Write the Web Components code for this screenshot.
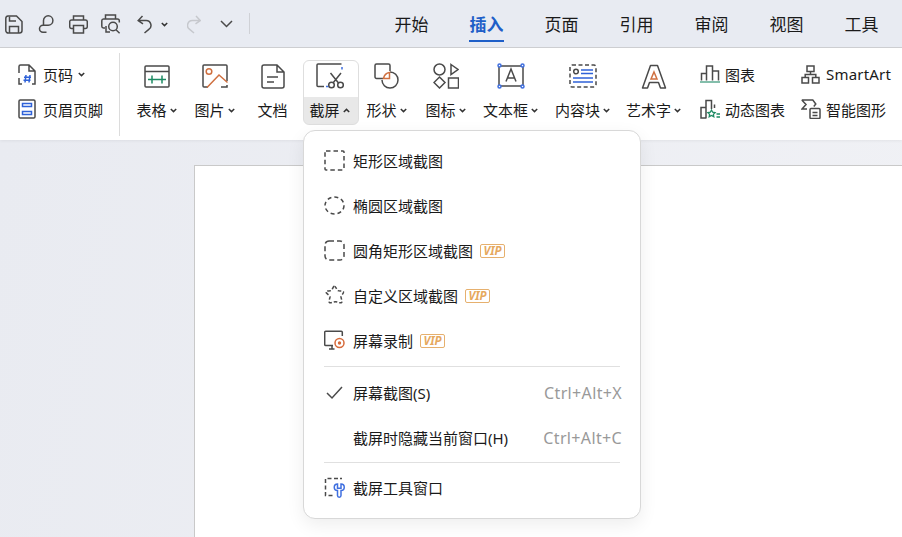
<![CDATA[<!DOCTYPE html>
<html lang="zh"><head><meta charset="utf-8"><title>截屏</title>
<style>
html,body{margin:0;height:100%;overflow:hidden;background:#eceef4}
body{font-family:"Noto Sans","Noto Sans CJK SC",sans-serif;color:#1a1a1a;width:902px;height:537px;position:relative;display:flex;flex-direction:column}
svg{display:block;fill:none;stroke:#4a4a4a;stroke-width:1.5}
</style>
<script>
const def=(name,html)=>{customElements.define(name,class extends HTMLElement{
  constructor(){super();this.attachShadow({mode:'open'})}
  connectedCallback(){this.shadowRoot.innerHTML=typeof html==='function'?html(this):html;}
})};
const chev=(up,ml=3)=>`<svg class="chev" width="7" height="5" viewBox="0 0 7 5" style="display:inline-block;margin-left:${ml}px;fill:none;stroke:#333;stroke-width:1.500;vertical-align:2px"><path d="${up?'M.8 4L3.500 1.400 6.200 4':'M.8 1l2.700 2.600L6.200 1'}"/></svg>`;

def('qa-chevron',`<style>:host{display:block}</style>${chev(false,0)}`);

def('app-titlebar',`<style>
:host{display:flex;align-items:center;flex:none;height:47px;background:#e8ebf2;border-bottom:1px solid #cfd0d3}
.qa{display:flex;align-items:center;width:249px;height:100%;padding-top:1px;box-sizing:border-box}
.div{width:1px;height:21px;background:#cfd1d6;margin-right:124px}
.tabs{display:flex;margin-top:2px}
</style><div class="qa"><slot name="qa"></slot></div><div class="div"></div><div class="tabs"><slot></slot></div>`);

def('tab-item',e=>`<style>
:host{display:flex;flex-direction:column;align-items:center;width:75px;font-size:17px;line-height:24px;position:relative;color:#1a1a1a}
.a{color:#1f5fc8;font-weight:700}
.u{position:absolute;left:20px;right:20px;top:27px;height:2px;background:#1f5fc8}
</style><span class="${e.hasAttribute('active')?'a':''}"><slot></slot></span>${e.hasAttribute('active')?'<i class="u"></i>':''}`);

def('app-ribbon',`<style>
:host{display:flex;flex:none;height:92px;background:#fff;box-sizing:border-box;padding:5px 0 0 0;box-shadow:0 1px 3px rgba(0,0,0,.06);position:relative;z-index:1}
.first{width:101px;padding:9px 0 0 18px}
.sep{width:1px;height:83px;background:#dcdcdc;margin-right:9px}
.tools{display:flex;margin-right:11px;padding-top:7px}
.small{display:flex;padding-top:9px}
</style><div class="first"><slot name="first"></slot></div><div class="sep"></div><div class="tools"><slot></slot></div><div class="small"><slot name="small"></slot></div>`);

def('ribbon-tool',e=>`<style>
:host{display:block;width:${e.getAttribute('w')}px;height:65px;font-size:15px;color:#1a1a1a}
.b{height:100%;display:flex;flex-direction:column;align-items:center;border-radius:6px;box-sizing:border-box;border:1px solid transparent}
.open{border-color:#dedede;background:linear-gradient(#fff 0 36px,#e8e8e8 36px)}
.ic{height:36px;display:flex;align-items:center;justify-content:center;padding:0 2px 4px 0;box-sizing:border-box}
.l{height:28px;display:flex;align-items:center;white-space:nowrap;line-height:1;padding:1px 3px 0 0}
</style><div class="b ${e.hasAttribute('open')?'open':''}"><div class="ic"><slot></slot></div><div class="l">${e.getAttribute('label')}${e.hasAttribute('chev')?chev(e.hasAttribute('up')):''}</div></div>`);

def('ribbon-small',e=>`<style>
:host{display:flex;align-items:center;height:24px;font-size:15px;white-space:nowrap;color:#1a1a1a}
.i{display:flex;width:25px;flex:none}
</style><span class="i"><slot name="icon"></slot></span><span><slot></slot></span>${e.hasAttribute('chev')?chev(false,5):''}`);

def('doc-canvas',`<style>
:host{display:block;flex:none;height:397px;padding:25px 0 0 194px;box-sizing:border-box;background:linear-gradient(100deg,#e9ebf1,#f0f1f5)}
.p{height:100%;background:#fff;border:1px solid #c9c9c9;border-right:0;border-bottom:0}
</style><div class="p"></div>`);

def('shot-menu',`<style>
:host{display:block;position:absolute;left:303px;top:130px;width:338px;height:389px;box-sizing:border-box;padding:7px 0 8px;background:#fff;border:1px solid #d8d8d8;border-radius:12px;box-shadow:0 6px 18px rgba(0,0,0,.07);z-index:5}
</style><slot></slot>`);

def('menu-sep',`<style>:host{display:block;height:1px;background:#e0e0e0;margin-left:20px!important;margin-right:20px!important}</style>`);

def('vip-badge',`<style>
:host{display:inline-flex;align-items:center;justify-content:center;width:25px;height:14px;box-sizing:border-box;border:1.200px solid #e6b06e;border-radius:2px;color:#e6a85e;font:italic 700 11.500px "Noto Sans",sans-serif;margin-left:7px}
</style>VIP`);

def('shot-item',e=>`<style>
:host{display:flex;align-items:center;height:45px;font-size:15px;padding-left:20px;padding-right:18px;color:#1a1a1a;white-space:nowrap}
.i{width:29px;flex:none;display:flex}
.k{margin-left:auto;color:#999;font-size:16px;letter-spacing:.35px}
</style><span class="i"><slot name="icon"></slot></span><span>${e.getAttribute('label')}</span>${e.hasAttribute('vip')?'<vip-badge></vip-badge>':''}${e.getAttribute('key')?`<span class="k">${e.getAttribute('key')}</span>`:''}`);
</script>
</head><body>
<app-titlebar>
  <svg slot="qa" style="margin-left:5px" width="18" height="19" viewBox="0 0 18 19"><path d="M3 1h8.500L17 6.500V15.500a2.500 2.500 0 0 1-2.500 2.500h-11A2.500 2.500 0 0 1 .8 15.500v-12A2.500 2.500 0 0 1 3 1z"/><path d="M4.500 1.500V6h6.500M4.500 18v-6.500h9V18"/></svg>
  <svg slot="qa" style="margin-left:15px" width="17" height="19" viewBox="0 0 17 19"><path d="M5.500 9.500V5.500A4.700 4.700 0 1 1 10.200 10.200H5A3.500 3.500 0 1 0 5 17.200H8.500"/></svg>
  <svg slot="qa" style="margin-left:14px" width="19" height="19" viewBox="0 0 19 19"><path d="M4.500 5V1h10v4M4.500 13.500H2.500a1.800 1.800 0 0 1-1.800-1.800V6.800A1.800 1.800 0 0 1 2.500 5h14a1.800 1.800 0 0 1 1.800 1.800v4.900a1.800 1.800 0 0 1-1.800 1.800h-2"/><path d="M4.500 10.500h10V18h-10z"/></svg>
  <svg slot="qa" style="margin-left:13px" width="20" height="20" viewBox="0 0 20 20"><path d="M4.500 5V1h10v4M4 14H2.500A1.800 1.800 0 0 1 .8 12.200V6.800A1.800 1.800 0 0 1 2.500 5h14a1.800 1.800 0 0 1 1.800 1.800v1.700"/><circle cx="12" cy="12.500" r="4.300"/><path d="M15 15.800l3.600 3.400M5 12v6h4"/></svg>
  <svg slot="qa" style="margin-left:16px" width="15" height="19" viewBox="0 0 15 19"><path d="M5.500 1L1.200 5.600l4.800 3.200M1.500 5.600h7.700a4.800 4.800 0 0 1 2.600 8.800L7.500 18"/></svg>
  <qa-chevron slot="qa" style="margin-left:9px"></qa-chevron>
  <svg slot="qa" style="margin-left:19px;stroke:#c6c8cd" width="14" height="19" viewBox="0 0 14 19"><path d="M9 1l4.300 4.600-4.800 3.200M13 5.600H5.300a4.800 4.800 0 0 0-2.600 8.800L7 18"/></svg>
  <svg slot="qa" style="margin-left:19px" width="13" height="8" viewBox="0 0 13 8"><path d="M1 1l5.500 5.500L12 1"/></svg>
  <tab-item>开始</tab-item><tab-item active>插入</tab-item><tab-item>页面</tab-item><tab-item>引用</tab-item><tab-item>审阅</tab-item><tab-item>视图</tab-item><tab-item>工具</tab-item>
</app-titlebar>

<app-ribbon>
  <div slot="first" style="display:flex;flex-direction:column;gap:11px">
    <ribbon-small chev><svg slot="icon" width="18" height="21" viewBox="0 0 18 21"><path d="M1 9V2.500A1.500 1.500 0 0 1 2.500 1H11l6 6v13h-3M11 1v6h6M1 14v6h3"/><path stroke="#2f62d8" d="M8 11l-1 7.500M12 11l-1 7.500M6 13.200h7M5.500 16.200h7"/></svg>页码</ribbon-small>
    <ribbon-small><svg slot="icon" width="18" height="20" viewBox="0 0 18 20"><rect x="1" y="1" width="16" height="18" rx="1.200"/><path stroke="#2f62d8" d="M4.500 4.500h9v3h-9zM4.500 12.500h9v3h-9z"/></svg>页眉页脚</ribbon-small>
  </div>
  <ribbon-tool w="58" chev label="表格"><svg width="26" height="23" viewBox="0 0 26 23"><rect x="1" y="1" width="24" height="21" rx="1"/><path d="M1 6.500h24"/><path stroke="#1d8a63" d="M4 14.500h18M8 10.500v8M18 10.500v8"/></svg></ribbon-tool>
  <ribbon-tool w="58" chev label="图片"><svg width="26" height="24" viewBox="0 0 26 24"><path d="M6 23H2a1 1 0 0 1-1-1V2a1 1 0 0 1 1-1h22a1 1 0 0 1 1 1v15M25 21v2h-6"/><g stroke="#cf7040"><circle cx="7" cy="7.500" r="2.800"/><path d="M5 23.500L17 11l8.500 7.500"/></g></svg></ribbon-tool>
  <ribbon-tool w="58" label="文档"><svg width="24" height="25" viewBox="0 0 24 25"><path d="M3 1h13l7 7v14a2 2 0 0 1-2 2H3a2 2 0 0 1-2-2V3a2 2 0 0 1 2-2zM16 1v7h7M6 13h11M6 18h7"/></svg></ribbon-tool>
  <ribbon-tool w="56" chev up open label="截屏"><svg width="28" height="26" viewBox="0 0 28 26"><path d="M25.500 1H2a1 1 0 0 0-1 1v20.500a1 1 0 0 0 1 1h6"/><path stroke="#3f6fe0" d="M26 4v2.500M10 23.500h2.500"/><circle cx="15.500" cy="22" r="2.800"/><circle cx="24.500" cy="22" r="2.800"/><path d="M14.500 10l8 10M25 10l-8 10"/></svg></ribbon-tool>
  <ribbon-tool w="58" chev label="形状"><svg width="26" height="26" viewBox="0 0 26 26"><path d="M9 15.500H2.500a1.500 1.500 0 0 1-1.500-1.500V2.500A1.500 1.500 0 0 1 2.500 1h12A1.500 1.500 0 0 1 16 2.500V8"/><path d="M16 9a8 8 0 1 1-8 8"/><path stroke="#cf7040" d="M9.500 15.500c.6-3 3-5.500 6-6V15.500z"/></svg></ribbon-tool>
  <ribbon-tool w="60" chev label="图标"><svg width="26" height="26" viewBox="0 0 26 26"><circle cx="6.500" cy="6.500" r="5.500"/><path d="M18 1.500l7 5-7 5zM6.500 14l5.500 5.500-5.500 5.500-5.500-5.500zM15.500 15h10v10h-10z"/></svg></ribbon-tool>
  <ribbon-tool w="70" chev label="文本框"><svg width="28" height="26" viewBox="0 0 28 26"><path d="M3 3h22M3 23h22M2 3v20M26 3v20"/><path d="M9 18.500L14 6l5 12.500M10.500 15h7"/><g fill="#fff" stroke="#3f6fe0"><circle cx="2.500" cy="2.500" r="1.500"/><circle cx="25.500" cy="2.500" r="1.500"/><circle cx="2.500" cy="23.500" r="1.500"/><circle cx="25.500" cy="23.500" r="1.500"/></g></svg></ribbon-tool>
  <ribbon-tool w="74" chev label="内容块"><svg width="28" height="24" viewBox="0 0 28 24"><path stroke-dasharray="4 2.500" d="M3 1h22a2 2 0 0 1 2 2v18a2 2 0 0 1-2 2H3a2 2 0 0 1-2-2V3a2 2 0 0 1 2-2z"/><circle cx="7" cy="7.500" r="2.300"/><path stroke="#2f62d8" d="M12 6h12M12 9.500h12M4 14h20M4 18h20"/></svg></ribbon-tool>
  <ribbon-tool w="68" chev label="艺术字"><svg width="26" height="25" viewBox="0 0 26 25"><path d="M1.500 24L9.500 1.500h7l8 22.500h-5l-2-5.500h-9l-2 5.500z" stroke-linejoin="round"/><path stroke="#cf7040" d="M13 8l3 7h-6z"/></svg></ribbon-tool>
  <div slot="small" style="display:flex;flex-direction:column;gap:11px;width:101px">
    <ribbon-small><svg slot="icon" width="20" height="18" viewBox="0 0 20 18"><path d="M1.500 15.500V8.500h5V1h6v5h6v9.500M6.500 8.500v7M12.500 6v9.500"/><path stroke="#5aa88f" d="M0 17h20"/></svg>图表</ribbon-small>
    <ribbon-small><svg slot="icon" width="21" height="20" viewBox="0 0 21 20"><path d="M6.500 19H1V8.500h5V1.500h5.500V10M6 8.500V19M14.500 5.500V9"/><path stroke="#1d8a63" stroke-width="1.300" d="M11.500 11l1.200 2.200 2.400.4-1.700 1.700.4 2.400-2.300-1.200-2.300 1.200.4-2.400-1.700-1.700 2.400-.4zM16.500 15h3.500M16.500 18h3.500"/></svg>动态图表</ribbon-small>
  </div>
  <div slot="small" style="display:flex;flex-direction:column;gap:11px">
    <ribbon-small><svg slot="icon" width="19" height="19" viewBox="0 0 19 19"><rect x="6" y="1" width="7" height="5.500"/><rect x="1" y="12.500" width="6.500" height="5.500"/><rect x="11.500" y="12.500" width="6.500" height="5.500"/><path d="M9.500 6.500v3M4.200 12.500v-3h10.600v3"/></svg><span style="font-size:15px;letter-spacing:.2px">SmartArt</span></ribbon-small>
    <ribbon-small><svg slot="icon" width="20" height="20" viewBox="0 0 20 20"><path d="M.8 1h11l3 4-2 2.500M.8 1l4.200 4.500L1 10h5"/><rect x="9" y="9.500" width="10" height="10" rx="1"/><path d="M11.500 13.500h5M11.500 16.500h5"/></svg>智能图形</ribbon-small>
  </div>
</app-ribbon>

<doc-canvas></doc-canvas>

<shot-menu>
  <shot-item label="矩形区域截图"><svg slot="icon" width="21" height="21" viewBox="0 0 21 21"><rect x="1" y="1" width="19" height="19" rx="1" stroke-dasharray="4.500 3"/></svg></shot-item>
  <shot-item label="椭圆区域截图"><svg slot="icon" width="21" height="21" viewBox="0 0 21 21"><ellipse cx="10.500" cy="10.500" rx="9.500" ry="8.500" stroke-dasharray="4 3"/></svg></shot-item>
  <shot-item label="圆角矩形区域截图" vip><svg slot="icon" width="21" height="21" viewBox="0 0 21 21"><rect x="1" y="1" width="19" height="19" rx="4" stroke-dasharray="5 3"/></svg></shot-item>
  <shot-item label="自定义区域截图" vip><svg slot="icon" width="21" height="21" viewBox="0 0 21 21"><path stroke-dasharray="3.500 2" d="M10.500 1.200c1.500 0 2 3.800 3.500 4.400s4.800-.2 5.500 1.200c.6 1.400-2.400 3.400-2.500 5s1.700 4.500.6 5.700-3.700-.8-6.100-.8-5 2-6.100.8.700-4.100.6-5.700S1.400 8.200 2 6.800C2.700 5.400 5.500 6.200 7 5.600s2-4.400 3.500-4.400z"/></svg></shot-item>
  <shot-item label="屏幕录制" vip><svg slot="icon" width="21" height="21" viewBox="0 0 21 21"><path d="M9 15.500H1.700a1 1 0 0 1-1-1V2.200a1 1 0 0 1 1-1h15.600a1 1 0 0 1 1 1V6M5 19h5.500M8 15.500V19"/><circle cx="15.500" cy="13" r="4.500" stroke="#d66a3a"/><circle cx="15.500" cy="13" r="1.700" fill="#d66a3a" stroke="none"/></svg></shot-item>
  <menu-sep style="margin:3px 0 3px"></menu-sep>
  <shot-item label="屏幕截图(S)" key="Ctrl+Alt+X"><svg slot="icon" width="21" height="21" viewBox="0 0 21 21"><path d="M3 11l5 5L18 5"/></svg></shot-item>
  <shot-item label="截屏时隐藏当前窗口(H)" key="Ctrl+Alt+C"></shot-item>
  <menu-sep style="margin:2px 0 2px"></menu-sep>
  <shot-item label="截屏工具窗口"><svg slot="icon" width="21" height="21" viewBox="0 0 21 21"><path stroke-dasharray="4 2.500" d="M14 1.500H1.500V18.500H9M18 1.500H16"/><path stroke="#3f6fe0" d="M13.500 7v4.200h3.500V7a3.200 3.200 0 0 1 0 6.500v5a1.700 1.700 0 0 1-3.500 0v-5a3.200 3.200 0 0 1 0-6.500z"/></svg></shot-item>
</shot-menu>
</body></html>]]>
